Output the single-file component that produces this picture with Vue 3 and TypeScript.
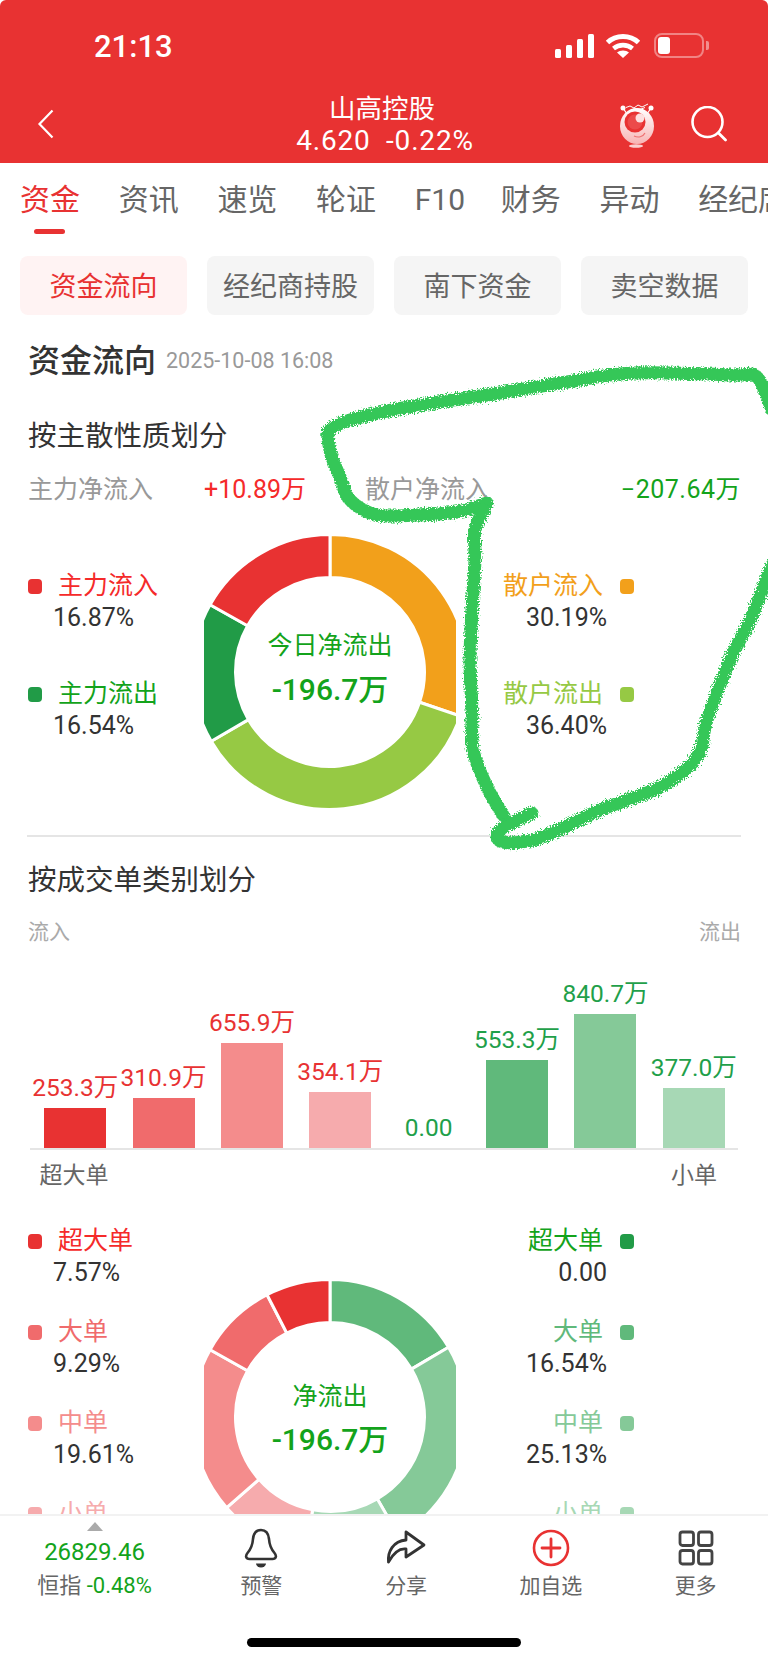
<script setup lang="ts">
import { computed } from 'vue';

type Slice = { pct: number; color: string };
type Bar = { value: number; label: string; color: string; text: string };
type Legend = { name: string; pct: string; swatch: string; color: string };

const tabs = ['资金', '资讯', '速览', '轮证', 'F10', '财务', '异动', '经纪席位'];
const pills = ['资金流向', '经纪商持股', '南下资金', '卖空数据'];

const RED = '#e83232';
const GREEN = '#1fa04a';

const flowSlices: Slice[] = [
  { pct: 30.19, color: '#f2a01b' },
  { pct: 36.4, color: '#96c944' },
  { pct: 16.54, color: '#219b47' },
  { pct: 16.87, color: RED },
];

const orderSlices: Slice[] = [
  { pct: 16.54, color: '#60b97b' },
  { pct: 25.13, color: '#85c998' },
  { pct: 11.27, color: '#a7d8b5' },
  { pct: 10.59, color: '#f6abad' },
  { pct: 19.61, color: '#f48c8c' },
  { pct: 9.29, color: '#f06b6c' },
  { pct: 7.57, color: RED },
];

const flowLeft: Legend[] = [
  { name: '主力流入', pct: '16.87%', swatch: RED, color: '#f52a2a' },
  { name: '主力流出', pct: '16.54%', swatch: '#219b47', color: '#13a31b' },
];
const flowRight: Legend[] = [
  { name: '散户流入', pct: '30.19%', swatch: '#f2a01b', color: '#f2a01b' },
  { name: '散户流出', pct: '36.40%', swatch: '#96c944', color: '#96c944' },
];
const orderLeft: Legend[] = [
  { name: '超大单', pct: '7.57%', swatch: RED, color: '#f52a2a' },
  { name: '大单', pct: '9.29%', swatch: '#f06b6c', color: '#f06b6c' },
  { name: '中单', pct: '19.61%', swatch: '#f48c8c', color: '#f48c8c' },
  { name: '小单', pct: '10.59%', swatch: '#f6abad', color: '#f6abad' },
];
const orderRight: Legend[] = [
  { name: '超大单', pct: '0.00', swatch: '#219b47', color: '#13a31b' },
  { name: '大单', pct: '16.54%', swatch: '#60b97b', color: '#60b97b' },
  { name: '中单', pct: '25.13%', swatch: '#85c998', color: '#85c998' },
  { name: '小单', pct: '11.27%', swatch: '#a7d8b5', color: '#a7d8b5' },
];

const bars: Bar[] = [
  { value: 253.3, label: '253.3万', color: RED, text: RED },
  { value: 310.9, label: '310.9万', color: '#f06b6c', text: RED },
  { value: 655.9, label: '655.9万', color: '#f48c8c', text: RED },
  { value: 354.1, label: '354.1万', color: '#f6abad', text: RED },
  { value: 0, label: '0.00', color: '#219b47', text: GREEN },
  { value: 553.3, label: '553.3万', color: '#60b97b', text: GREEN },
  { value: 840.7, label: '840.7万', color: '#85c998', text: GREEN },
  { value: 377, label: '377.0万', color: '#a7d8b5', text: GREEN },
];

// 最大值 840.7 对应 134px
const barHeight = (v: number) => (v / 840.7) * 134 + 'px';

function arc(startDeg: number, endDeg: number, r1: number, r2: number) {
  const pt = (deg: number, r: number) => {
    const a = ((deg - 90) * Math.PI) / 180;
    return `${(r * Math.cos(a)).toFixed(2)} ${(r * Math.sin(a)).toFixed(2)}`;
  };
  const large = endDeg - startDeg > 180 ? 1 : 0;
  return `M${pt(startDeg, r2)}A${r2} ${r2} 0 ${large} 1 ${pt(endDeg, r2)}L${pt(endDeg, r1)}A${r1} ${r1} 0 ${large} 0 ${pt(startDeg, r1)}Z`;
}

function slicePaths(list: Slice[]) {
  const total = list.reduce((s, x) => s + x.pct, 0);
  let at = 0;
  return list.map((x) => {
    const start = at;
    at += (x.pct / total) * 360;
    return { d: arc(start, at, 94.5, 137.5), color: x.color };
  });
}

const flowPaths = computed(() => slicePaths(flowSlices));
const orderPaths = computed(() => slicePaths(orderSlices));

// 手写的绿色圈注
function smooth(pts: number[][]) {
  let d = `M${pts[0][0]} ${pts[0][1]}`;
  for (let i = 0; i < pts.length - 1; i++) {
    const p0 = pts[i - 1] || pts[i];
    const p1 = pts[i];
    const p2 = pts[i + 1];
    const p3 = pts[i + 2] || p2;
    const c1x = p1[0] + (p2[0] - p0[0]) / 6;
    const c1y = p1[1] + (p2[1] - p0[1]) / 6;
    const c2x = p2[0] - (p3[0] - p1[0]) / 6;
    const c2y = p2[1] - (p3[1] - p1[1]) / 6;
    d += `C${c1x.toFixed(1)} ${c1y.toFixed(1)} ${c2x.toFixed(1)} ${c2y.toFixed(1)} ${p2[0]} ${p2[1]}`;
  }
  return d;
}

const scribbles = [
  smooth([
    [772, 410], [757, 377], [733, 375], [633, 373], [567, 382], [500, 393], [433, 403],
    [383, 412], [333, 427], [330, 450], [340, 477], [350, 500], [377, 515], [417, 515],
    [457, 512], [487, 503],
  ]),
  smooth([
    [484, 510], [475, 530], [475, 560], [472, 610], [470, 660], [472, 710], [473, 750],
    [487, 787], [503, 815],
  ]),
  smooth([
    [532, 813], [500, 830], [503, 842], [540, 838], [600, 810], [660, 787], [697, 757],
    [707, 720], [730, 660], [750, 620], [772, 565],
  ]),
];
</script>

<template>
  <div class="phone">
    <header class="top">
      <div class="status">
        <span class="time">21:13</span>
        <div class="status-icons">
          <svg width="39" height="24" viewBox="0 0 39 24">
            <rect x="0" y="15" width="6" height="9" rx="1.5" fill="#fff" />
            <rect x="11" y="11" width="6" height="13" rx="1.5" fill="#fff" />
            <rect x="22" y="5" width="6" height="19" rx="1.5" fill="#fff" />
            <rect x="33" y="0" width="6" height="24" rx="1.5" fill="#fff" />
          </svg>
          <svg width="36" height="24" viewBox="0 0 36 24">
            <path d="M2.500 8.500C11 .5 25 .5 33.500 8.500" fill="none" stroke="#fff" stroke-width="5" />
            <path d="M8.500 14.500C14 10 22 10 27.500 14.500" fill="none" stroke="#fff" stroke-width="4.600" />
            <path d="M12 18.500C15 15.800 21 15.800 24 18.500L18 24Z" fill="#fff" />
          </svg>
          <div class="battery">
            <div class="battery-body"><div class="battery-level"></div></div>
            <div class="battery-nub"></div>
          </div>
        </div>
      </div>
      <div class="nav">
        <svg class="back" width="18" height="30" viewBox="0 0 18 30">
          <path d="M15.500 1.500L2.500 15L15.500 28.500" fill="none" stroke="#fff" stroke-width="2.200" />
        </svg>
        <div class="nav-title">
          <div class="stock-name">山高控股</div>
          <div class="stock-price">4.620&nbsp;&nbsp;-0.22%</div>
        </div>
        <div class="nav-actions">
          <svg width="38" height="46" viewBox="0 0 38 46">
            <defs>
              <linearGradient id="mascotFill" x1="0" y1="0" x2="0" y2="1">
                <stop offset="0" stop-color="#fff" />
                <stop offset="1" stop-color="#f8b4b4" />
              </linearGradient>
            </defs>
            <path d="M8 5.500l4 -1.500 4 2 4 -3 4 2 6 -3M13 8l5 -1.500 4 1 5 -2" fill="none" stroke="#fff" stroke-width="1" />
            <circle cx="5" cy="6" r="2.500" fill="#fff" />
            <circle cx="33" cy="6" r="2.500" fill="#fff" />
            <path d="M5 6L9 12M33 6L29 12" stroke="#fff" stroke-width="1.200" />
            <ellipse cx="19" cy="24" rx="17" ry="18" fill="url(#mascotFill)" />
            <circle cx="17" cy="20" r="10.500" fill="#e83232" />
            <circle cx="17" cy="20" r="7.500" fill="#ef5a5a" opacity="0.600" />
            <circle cx="22" cy="16" r="4.500" fill="#fde0e0" />
            <path d="M16 34C20 36 25 35 27 31" fill="none" stroke="#ee7070" stroke-width="1.200" />
            <ellipse cx="18" cy="44" rx="7" ry="1.800" fill="#fbd0d0" />
          </svg>
          <svg class="search" width="36" height="36" viewBox="0 0 36 36">
            <circle cx="16.500" cy="16" r="15" fill="none" stroke="#fff" stroke-width="2.600" />
            <path d="M27.500 27L34.500 34" fill="none" stroke="#fff" stroke-width="2.800" stroke-linecap="round" />
          </svg>
        </div>
      </div>
    </header>

    <main class="content">
      <nav class="tabs">
        <div v-for="(t, i) in tabs" :key="t" class="tab" :class="{ active: i === 0, latin: t === 'F10' }">
          {{ t }}
        </div>
      </nav>

      <div class="pills">
        <div v-for="(p, i) in pills" :key="p" class="pill" :class="{ active: i === 0 }">{{ p }}</div>
      </div>

      <div class="section-head">
        <span class="section-title">资金流向</span>
        <span class="section-date">2025-10-08 16:08</span>
      </div>

      <h2 class="sub-title first">按主散性质划分</h2>

      <div class="net-row">
        <div class="net-cell">
          <span class="net-name">主力净流入</span><span class="net-val up">+10.89万</span>
        </div>
        <div class="net-cell">
          <span class="net-name">散户净流入</span><span class="net-val down">−207.64万</span>
        </div>
      </div>

      <div class="chart flow">
        <div class="legend left">
          <div v-for="l in flowLeft" :key="l.name" class="legend-item">
            <div class="legend-name">
              <i class="swatch" :style="{ background: l.swatch }"></i>
              <span :style="{ color: l.color }">{{ l.name }}</span>
            </div>
            <div class="legend-pct">{{ l.pct }}</div>
          </div>
        </div>
        <div class="donut">
          <svg width="252" height="276" viewBox="-126 -138 252 276">
            <path v-for="s in flowPaths" :key="s.color" :d="s.d" :fill="s.color" stroke="#fff" stroke-width="3" />
          </svg>
          <div class="donut-text">
            <div class="donut-label">今日净流出</div>
            <div class="donut-value">-196.7万</div>
          </div>
        </div>
        <div class="legend right">
          <div v-for="l in flowRight" :key="l.name" class="legend-item">
            <div class="legend-name">
              <span :style="{ color: l.color }">{{ l.name }}</span>
              <i class="swatch" :style="{ background: l.swatch }"></i>
            </div>
            <div class="legend-pct">{{ l.pct }}</div>
          </div>
        </div>
      </div>

      <div class="divider"></div>

      <h2 class="sub-title second">按成交单类别划分</h2>

      <div class="io-row"><span>流入</span><span>流出</span></div>

      <div class="bars">
        <div v-for="b in bars" :key="b.label" class="bar-col">
          <div class="bar-label" :style="{ color: b.text }">{{ b.label }}</div>
          <div class="bar" :style="{ height: barHeight(b.value), background: b.color }"></div>
        </div>
      </div>
      <div class="axis"><span>超大单</span><span>小单</span></div>

      <div class="chart orders">
        <div class="legend left">
          <div v-for="l in orderLeft" :key="l.name" class="legend-item">
            <div class="legend-name">
              <i class="swatch" :style="{ background: l.swatch }"></i>
              <span :style="{ color: l.color }">{{ l.name }}</span>
            </div>
            <div class="legend-pct">{{ l.pct }}</div>
          </div>
        </div>
        <div class="donut">
          <svg width="252" height="276" viewBox="-126 -138 252 276">
            <path v-for="s in orderPaths" :key="s.color" :d="s.d" :fill="s.color" stroke="#fff" stroke-width="3" />
          </svg>
          <div class="donut-text">
            <div class="donut-label">净流出</div>
            <div class="donut-value">-196.7万</div>
          </div>
        </div>
        <div class="legend right">
          <div v-for="l in orderRight" :key="l.name" class="legend-item">
            <div class="legend-name">
              <span :style="{ color: l.color }">{{ l.name }}</span>
              <i class="swatch" :style="{ background: l.swatch }"></i>
            </div>
            <div class="legend-pct">{{ l.pct }}</div>
          </div>
        </div>
      </div>
    </main>

    <footer class="bottom">
      <div class="toolbar">
        <div class="index">
          <i class="caret"></i>
          <div class="index-num">26829.46</div>
          <div class="index-name">恒指 <em>-0.48%</em></div>
        </div>
        <div class="tool">
          <svg width="34" height="40" viewBox="0 0 34 40">
            <path d="M17 2C12 2 9.500 6 9 11C8.500 18 7 21 3.500 25C1 28 2 31 5.500 31H28.500C32 31 33 28 30.500 25C27 21 25.500 18 25 11C24.500 6 22 2 17 2Z" fill="none" stroke="#333" stroke-width="2.600" stroke-linejoin="round" />
            <path d="M12 35.500H22A5 4 0 0 1 12 35.500Z" fill="#333" />
          </svg>
          <span>预警</span>
        </div>
        <div class="tool">
          <svg width="40" height="40" viewBox="0 0 40 40">
            <path d="M20 4L38 17L20 29V21C13 20 7 26 2.500 34C1.500 24 7 13 20 12Z" fill="none" stroke="#333" stroke-width="2.800" stroke-linejoin="round" />
          </svg>
          <span>分享</span>
        </div>
        <div class="tool">
          <svg width="40" height="40" viewBox="0 0 40 40">
            <circle cx="20" cy="20" r="17" fill="none" stroke="#e83232" stroke-width="2.600" />
            <path d="M20 11V29M11 20H29" stroke="#e83232" stroke-width="2.800" stroke-linecap="round" />
          </svg>
          <span>加自选</span>
        </div>
        <div class="tool">
          <svg width="36" height="40" viewBox="0 0 36 40">
            <rect x="2" y="4" width="13.500" height="13.500" rx="2.500" fill="none" stroke="#444" stroke-width="2.800" />
            <rect x="20.500" y="4" width="13.500" height="13.500" rx="2.500" fill="none" stroke="#444" stroke-width="2.800" />
            <rect x="2" y="22.500" width="13.500" height="13.500" rx="2.500" fill="none" stroke="#444" stroke-width="2.800" />
            <rect x="20.500" y="22.500" width="13.500" height="13.500" rx="2.500" fill="none" stroke="#444" stroke-width="2.800" />
          </svg>
          <span>更多</span>
        </div>
      </div>
      <div class="home-bar"></div>
    </footer>

    <svg class="scribble" width="768" height="1662" viewBox="0 0 768 1662">
      <defs>
        <filter id="rough" x="-5%" y="-5%" width="110%" height="110%">
          <feTurbulence type="fractalNoise" baseFrequency="0.7" numOctaves="3" seed="4" />
          <feDisplacementMap in="SourceGraphic" scale="7" />
          <feGaussianBlur stdDeviation="0.400" />
        </filter>
      </defs>
      <g filter="url(#rough)" fill="none" stroke="#34c759" stroke-width="13" stroke-linecap="round" stroke-linejoin="round">
        <path v-for="d in scribbles" :key="d" :d="d" />
      </g>
    </svg>
  </div>
</template>

<style scoped>
.phone {
  position: relative;
  width: 768px;
  height: 1662px;
  display: flex;
  flex-direction: column;
  overflow: hidden;
  background: #fff;
  color: #333;
  font-family: Roboto, "Noto Sans CJK SC", sans-serif;
}

.top {
  height: 163px;
  flex: none;
  background: #e83232;
  color: #fff;
  border-top-left-radius: 6px;
  border-top-right-radius: 6px;
}

.status {
  height: 92px;
  display: flex;
  align-items: flex-start;
  justify-content: space-between;
  padding: 0 59px 0 94px;
}

.time {
  margin-top: 27px;
  font-size: 31px;
  line-height: 40px;
  font-weight: 500;
}

.status-icons {
  display: flex;
  align-items: center;
  gap: 11px;
  margin-top: 33px;
}

.battery {
  display: flex;
  align-items: center;
  gap: 2px;
  margin-left: 2px;
}

.battery-body {
  width: 50px;
  height: 25px;
  box-sizing: border-box;
  border: 2px solid rgba(255, 255, 255, 0.4);
  border-radius: 8px;
  padding: 2px;
}

.battery-level {
  width: 12px;
  height: 100%;
  background: #fff;
  border-radius: 3px;
}

.battery-nub {
  width: 3px;
  height: 9px;
  background: rgba(255, 255, 255, 0.45);
  border-radius: 0 2px 2px 0;
}

.nav {
  display: grid;
  grid-template-columns: 1fr auto 1fr;
  align-items: start;
  padding: 1px 41px 0 37px;
}

.back {
  margin-top: 16px;
}

.nav-title {
  text-align: center;
}

.stock-name {
  font-size: 26.500px;
  line-height: 32px;
}

.stock-price {
  padding-left: 6px;
  font-size: 28px;
  line-height: 32px;
  letter-spacing: 0.8px;
}

.nav-actions {
  display: flex;
  justify-content: flex-end;
  align-items: flex-start;
  gap: 35px;
  margin-top: 9px;
}

.search {
  margin-top: 4px;
}

.content {
  flex: 1;
  min-height: 0;
  overflow: hidden;
}

.tabs {
  display: flex;
  gap: 38.700px;
  padding: 18px 0 0 20px;
  white-space: nowrap;
  overflow: hidden;
}

.tab {
  position: relative;
  flex: none;
  height: 53px;
  font-size: 30px;
  line-height: 38px;
  color: #666;
}

.tab.latin {
  margin-right: -3px;
}

.tab.active {
  color: #e83232;
}

.tab.active::after {
  content: "";
  position: absolute;
  left: 14px;
  right: 15px;
  bottom: 0;
  height: 5px;
  border-radius: 3px;
  background: #e83232;
}

.pills {
  display: flex;
  gap: 20px;
  padding: 0 20px;
  margin-top: 22px;
}

.pill {
  flex: 1;
  height: 59px;
  box-sizing: border-box;
  padding-bottom: 3px;
  display: flex;
  align-items: center;
  justify-content: center;
  background: #f5f5f5;
  border-radius: 8px;
  font-size: 27px;
  color: #666;
}

.pill.active {
  background: #fff3f3;
  color: #e83232;
}

.section-head {
  display: flex;
  align-items: center;
  gap: 10px;
  height: 40px;
  margin-top: 26px;
  padding-left: 28px;
}

.section-title {
  font-size: 32px;
  line-height: 40px;
  font-weight: 500;
  color: #333;
}

.section-date {
  font-size: 21.500px;
  line-height: 24px;
  color: #999;
}

.sub-title {
  margin: 0;
  padding-left: 28px;
  font-size: 28.500px;
  line-height: 36px;
  font-weight: 400;
  color: #333;
}

.sub-title.first {
  margin-top: 38px;
}

.sub-title.second {
  margin-top: 26px;
}

.net-row {
  display: flex;
  margin-top: 19px;
  padding: 0 28px;
  gap: 59px;
  line-height: 32px;
}

.net-cell {
  display: flex;
  justify-content: space-between;
  flex: none;
}

.net-cell:first-child {
  width: 278px;
}

.net-cell:last-child {
  width: 376px;
}

.net-name {
  font-size: 25px;
  color: #999;
}

.net-val {
  font-size: 25px;
}

.up {
  color: #f52a2a;
}

.down {
  color: #13a31b;
  letter-spacing: 0.5px;
}

.chart {
  display: flex;
  align-items: flex-start;
  padding-left: 28px;
}

.chart.flow {
  margin-top: 29px;
  height: 274px;
}

.chart.orders {
  margin-top: 36px;
}

.legend {
  display: flex;
  flex-direction: column;
  box-sizing: border-box;
  flex: none;
}

.flow .legend {
  padding-top: 37px;
  gap: 46px;
}

.orders .legend {
  gap: 29px;
}

.donut {
  position: relative;
  flex: none;
  width: 252px;
  height: 276px;
  margin-top: -1px;
}

.orders .donut {
  margin-top: 52px;
}

.legend.left {
  width: 148px;
  margin-right: 28px;
}

.legend.right {
  width: 178px;
  align-items: flex-end;
}

.legend-name {
  display: flex;
  align-items: center;
  font-size: 25px;
  line-height: 28px;
}

.legend.left .swatch {
  margin-right: 16px;
}

.legend.right .swatch {
  margin-left: 17px;
}

.legend.right .legend-name {
  justify-content: flex-end;
}

.swatch {
  flex: none;
  width: 14px;
  height: 15px;
  border-radius: 4px;
}

.legend-pct {
  margin-top: 2px;
  font-size: 25px;
  line-height: 32px;
  color: #333;
}

.legend.left .legend-pct {
  margin-left: 25px;
}

.legend.right .legend-pct {
  margin-right: 27px;
  text-align: right;
}

.donut svg {
  display: block;
}

.donut-text {
  position: absolute;
  inset: 0;
  box-sizing: border-box;
  padding-bottom: 6px;
  display: flex;
  flex-direction: column;
  align-items: center;
  justify-content: center;
  color: #13a31b;
}

.orders .donut-text {
  padding-bottom: 0;
  padding-top: 4px;
}

.donut-label {
  font-size: 25px;
  line-height: 36px;
}

.donut-value {
  margin-top: 6px;
  font-size: 30px;
  line-height: 40px;
  font-weight: 500;
}

.orders .donut-value {
  margin-top: 5px;
}

.divider {
  height: 2px;
  margin: 26px 27px 0;
  background: #e5e5e5;
}

.io-row {
  display: flex;
  justify-content: space-between;
  margin-top: 19px;
  padding: 0 27px 0 28px;
  font-size: 21px;
  line-height: 28px;
  color: #aaa;
}

.bars {
  display: flex;
  height: 202px;
  margin: 0 30px;
  padding-left: 1px;
  border-bottom: 2px solid #e5e5e5;
}

.bar-col {
  flex: 1;
  display: flex;
  flex-direction: column;
  align-items: center;
  justify-content: flex-end;
}

.bar-label {
  margin-bottom: 6px;
  font-size: 24.500px;
  line-height: 28px;
  white-space: nowrap;
}

.bar {
  width: 62px;
}

.axis {
  display: flex;
  justify-content: space-between;
  margin: 11px 30px 0;
  font-size: 23px;
  line-height: 30px;
  color: #666;
}

.axis span {
  width: 88px;
  text-align: center;
}

.bottom {
  flex: none;
  height: 148px;
  box-sizing: border-box;
  border-top: 2px solid #f2f2f2;
  background: #fff;
}

.toolbar {
  display: flex;
  height: 90px;
}

.index {
  position: relative;
  width: 189px;
  flex: none;
  text-align: center;
  padding-top: 21px;
}

.caret {
  position: absolute;
  left: 87px;
  top: 6px;
  width: 0;
  height: 0;
  border-left: 8px solid transparent;
  border-right: 8px solid transparent;
  border-bottom: 9px solid #aaa;
}

.index-num {
  font-size: 24px;
  line-height: 30px;
  color: #13a31b;
}

.index-name {
  margin-top: 3px;
  font-size: 22px;
  line-height: 32px;
  color: #666;
}

.index-name em {
  font-style: normal;
  color: #13a31b;
}

.tool {
  flex: 1;
  display: flex;
  flex-direction: column;
  align-items: center;
  padding-top: 12px;
  font-size: 21px;
  line-height: 32px;
  color: #666;
}

.tool span {
  margin-top: 2px;
}

.home-bar {
  width: 274px;
  height: 9px;
  margin: 32px auto 0;
  border-radius: 5px;
  background: #000;
}

.scribble {
  position: absolute;
  left: 0;
  top: 0;
  pointer-events: none;
}
</style>
